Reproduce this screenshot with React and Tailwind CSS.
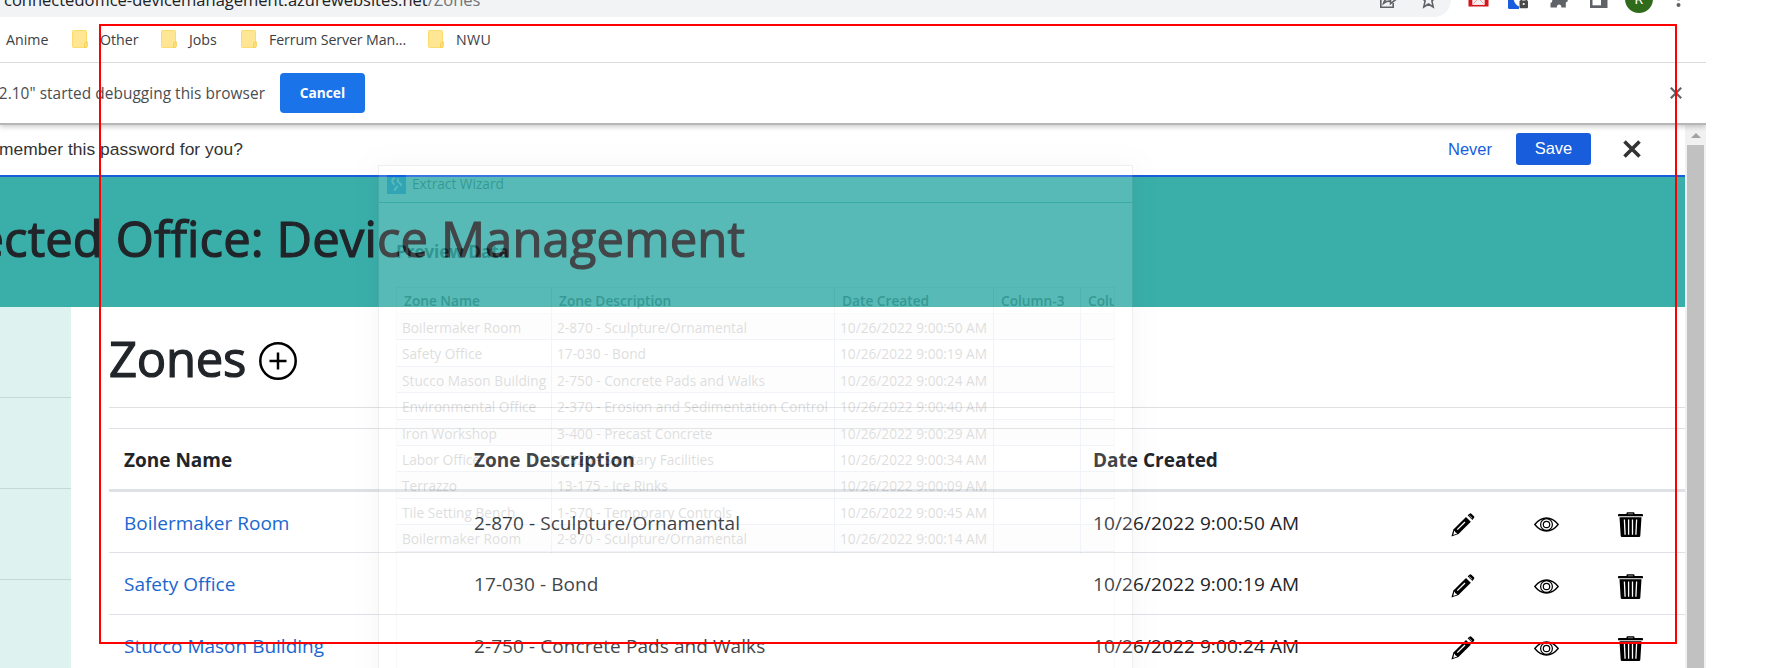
const zones = [
  ["Boilermaker Room", "2-870 - Sculpture/Ornamental", "10/26/2022 9:00:50 AM"],
  ["Safety Office", "17-030 - Bond", "10/26/2022 9:00:19 AM"],
  ["Stucco Mason Building", "2-750 - Concrete Pads and Walks", "10/26/2022 9:00:24 AM"],
];

const previewRows = [
  ...zones,
  ["Environmental Office", "2-370 - Erosion and Sedimentation Control", "10/26/2022 9:00:40 AM"],
  ["Iron Workshop", "3-400 - Precast Concrete", "10/26/2022 9:00:29 AM"],
  ["Labor Office", "1-520 - Sanitary Facilities", "10/26/2022 9:00:34 AM"],
  ["Terrazzo", "13-175 - Ice Rinks", "10/26/2022 9:00:09 AM"],
  ["Tile Setting Bench", "1-570 - Temporary Controls", "10/26/2022 9:00:45 AM"],
  ["Boilermaker Room", "2-870 - Sculpture/Ornamental", "10/26/2022 9:00:14 AM"],
];

function Folder() {
  return (
    <svg className="h-[18px] w-[16px] shrink-0" viewBox="0 0 16 18">
      <rect x="0.5" y="0.5" width="14" height="17" rx="0.8" fill="#ffe694" stroke="#fbdc6c" />
      <path d="M12.5 17.5v-4.2l2.8-1.6v4.6q0 1.2-1.2 1.2z" fill="#ffe27c" stroke="#f5cf4f" strokeWidth="0.9" />
    </svg>
  );
}

function Bookmark({ children, className }) {
  return (
    <div className={`flex items-center ${className}`}>
      <Folder />
      <span className="ml-[12px]">{children}</span>
    </div>
  );
}

function ToolbarIcons() {
  return (
    <svg className="h-[17px] w-[336px] shrink-0" viewBox="1370 0 336 17">
      <g fill="none" stroke="#5f6368" strokeWidth="1.6">
        <path d="M1380.8-6V7.2H1393.2V3" />
        <path d="M1383.5 3.5C1384.5-.5 1387-2 1390.5-2V-5L1396-.6 1390.5 3.6V.9C1387.500.9 1385.500 1.700 1383.500 3.500Z" />
        <path d="M1428.500-8L1430.500-3.200 1436-2.700 1431.900.9 1433.200 7 1428.500 4 1423.800 7 1425.100.9 1421-2.700 1426.500-3.200Z" />
      </g>
      <rect x="1468.500" y="-8" width="20" height="14.500" fill="#f7eeee" />
      <path d="M1468.500-8h3.800V6.500h-3.800zM1484.700-8h3.800V6.500h-3.800z" fill="#d5141c" />
      <path d="M1472 5.700h13" stroke="#d5141c" strokeWidth="1.500" />
      <path d="M1473.500 3.500l4-4M1483.500 3.500l-4-4" stroke="#eba0a3" strokeWidth="1" />
      <path d="M1508-8h11V9h-9.500q-1.500 0-1.500-1.500z" fill="#175ddc" />
      <path d="M1513-4h8V7.500Q1513.500 5 1513-4z" fill="#fff" />
      <rect x="1519.500" y="0.500" width="8.500" height="7.800" rx="1" fill="#4a4a4a" />
      <path d="M1521.300 1v-2.200a2.500 2.500 0 0 1 5 0V1" fill="none" stroke="#4a4a4a" strokeWidth="1.500" />
      <circle cx="1523.700" cy="4" r="1.100" fill="#fff" />
      <path d="M1550.500-6h17V-.8q.5 .8 0 2.300l-1.700 1V7.500h-4.500V6.200q-.4-1.700-2.200-1.700t-2.200 1.700V7.500h-6.400V3q1.800-.5 1.800-2.200t-1.800-2z" fill="#5f6368" />
      <path d="M1590-6h17.500V8H1590z" fill="#5f6368" />
      <path d="M1592.500-4h8.500V5.300h-8.500z" fill="#fff" />
      <circle cx="1639" cy="-1" r="14" fill="#2f6b1a" />
      <text x="1634.500" y="3.800" fill="#fff" fontFamily="Roboto, sans-serif" fontSize="14">R</text>
      <circle cx="1678.500" cy="5" r="2" fill="#5f6368" />
      <circle cx="1678.500" cy="-1.500" r="2" fill="#5f6368" />
    </svg>
  );
}

function Pencil() {
  return (
    <svg className="h-[24px] w-[24px]" viewBox="0 0 24 24">
      <path d="M16.600 2.200L18.900.5Q19.700 0 20.400.7L23 3.200Q23.700 4 23.100 4.700L21.400 6.900Z" fill="#000" />
      <path d="M15 4L19.800 8.800 7.500 21 .400 23.500 2.400 16.500Z" fill="#000" />
      <path d="M15.700 3.200L20.500 8" stroke="#fff" strokeWidth="0.900" />
      <path d="M6.300 16.600L14 9" stroke="#fff" strokeWidth="1.300" />
      <path d="M3.300 17.500L4.400 19.300 6.300 20.400 2.300 21.900Z" fill="#fff" />
      <path d="M18.300 2.600L21.200 5.400" stroke="#fff" strokeWidth="0.700" />
    </svg>
  );
}

function Eye() {
  return (
    <svg className="h-[15px] w-[25px]" viewBox="0 0 25 15" fill="none" stroke="#000">
      <path d="M.8 7.500Q6 1 12.500 1T24.200 7.500Q19 14 12.500 14T.8 7.500Z" strokeWidth="1.300" />
      <circle cx="12.500" cy="7.500" r="5.900" strokeWidth="1.200" />
      <circle cx="12.500" cy="7.500" r="3.200" strokeWidth="1.200" />
    </svg>
  );
}

function Trash() {
  return (
    <svg className="h-[25px] w-[25px]" viewBox="0 0 25 25">
      <path d="M8.500 2V1.200Q8.500.3 9.500.3h6q1 0 1 .9V2h7.700q.8 0 .8.9v1.300H0V2.900Q0 2 .8 2z" fill="#000" />
      <path d="M10 1.800h5" stroke="#888" strokeWidth="0.900" />
      <path d="M1.500 5.200h22l-1.200 18.500q0 1.300-1.300 1.300H4q-1.300 0-1.300-1.300z" fill="#000" />
      <path d="M6.400 7.500L7.100 22.800M10.600 7.500V22.800M14.500 7.500V22.800M18.600 7.500L17.900 22.800" stroke="#fff" strokeWidth="1.300" />
    </svg>
  );
}

function PreviewWindow() {
  return (
    <div className="absolute left-[378px] top-[165px] flex h-[520px] w-[755px] flex-col border border-[#999] bg-white text-[13.7px] text-[#222] opacity-15 shadow-[0_2px_20px_rgba(0,0,0,0.25)]">
      <div className="flex h-[37px] shrink-0 items-center border-b border-[#3c9a95] pl-[8px]">
        <svg className="h-[19px] w-[19px]" viewBox="0 0 19 19">
          <rect width="19" height="19" fill="#0078ff" />
          <path d="M8 3Q4.500 4 5.500 7T9 10.500 7 15.500M11.500 3.500Q9.500 6 12.500 8T13.500 13" fill="none" stroke="#fff" strokeWidth="2" strokeDasharray="9 2" />
        </svg>
        <span className="ml-[6px]">Extract Wizard</span>
      </div>
      <div className="flex h-[84px] shrink-0 items-center pl-[17px] pt-[14px] text-[17px] font-bold text-black">Preview Data</div>
      <div className="ml-[17px] w-[719px] grow overflow-hidden border border-[#ddd]">
        <div className="grid h-[26px] w-[800px] grid-cols-[155px_283px_159px_87px_1fr] border-b border-[#ddd] font-semibold leading-[26px]">
          {["Zone Name", "Zone Description", "Date Created", "Column-3", "Column-4"].map((name) => (
            <span key={name} className="border-r border-[#ccc] pl-[7px]">{name}</span>
          ))}
        </div>
        {previewRows.map((row, i) => (
          <div
            key={i}
            className="grid h-[26.400px] w-[800px] grid-cols-[155px_283px_159px_87px_1fr] border-b-[1.500px] border-[#a3b4d2] leading-[28px] even:bg-[#f7f7f7]"
          >
            {[...row, "", ""].map((cell, j) => (
              <span key={j} className="whitespace-nowrap border-r border-[#a3b4d2] pl-[5px]">{cell}</span>
            ))}
          </div>
        ))}
      </div>
    </div>
  );
}

const columns = "grid grid-cols-[349px_620px_358px_83px_84px_67px] items-center";

export default function App() {
  return (
    <div className="relative flex h-[668px] w-[1776px] flex-col overflow-hidden bg-white font-['Open_Sans','Noto_Sans',sans-serif] text-[#212529]">
      <div className="flex h-[17px] w-[1706px] shrink-0 overflow-hidden">
        <div className="h-[17px] w-[1370px] bg-[#f1f3f4] pl-[4px]">
          <div className="-mt-[12px] whitespace-nowrap text-[16.500px] leading-[24px] text-[#202124]">
            connectedoffice-devicemanagement.azurewebsites.net<span className="text-[#70757a]">/Zones</span>
          </div>
        </div>
        <div className="h-[17px] w-[336px]">
          <div className="h-[17px] w-[81px] rounded-br-[17px] bg-[#f1f3f4]" />
          <div className="relative -mt-[17px]">
            <ToolbarIcons />
          </div>
        </div>
      </div>

      <div className="flex h-[46px] w-[1706px] shrink-0 items-center border-b border-[#dadce0] text-[14.200px] text-[#3c4043]">
        <span className="ml-[6px] w-[66px]">Anime</span>
        <Bookmark className="w-[89px]">Other</Bookmark>
        <Bookmark className="w-[80px]">Jobs</Bookmark>
        <Bookmark className="w-[187px] tracking-[-0.100px]">Ferrum Server Man...</Bookmark>
        <Bookmark className="tracking-[0.300px]">NWU</Bookmark>
      </div>

      <div className="relative flex h-[62px] w-[1706px] shrink-0 items-center border-b-2 border-[#b4b6b8] shadow-[0_2px_5px_rgba(0,0,0,0.2)] [clip-path:inset(0_0_-8px_0)]">
        <div className="flex w-[265px] justify-end whitespace-nowrap pt-[2px] text-[15.400px] tracking-[0.050px] text-[#4a4d51]">2.10" started debugging this browser</div>
        <div className="ml-[15px] flex h-[40px] w-[85px] items-center justify-center rounded-[4px] bg-[#1a73e8] text-[13.700px] font-bold text-white">
          Cancel
        </div>
        <svg className="ml-auto mr-[24px] h-[12px] w-[12px]" viewBox="0 0 12 12">
          <path d="M.8.8L11.200 11.200M11.200.8L.8 11.200" stroke="#5f6368" strokeWidth="2.200" />
        </svg>
      </div>

      <div className="flex w-[1706px] grow">
        <div className="flex w-[1685px] flex-col overflow-hidden">
          <div className="flex h-[52px] shrink-0 items-center border-b-2 border-[#175ddc] pb-[2px] font-['Liberation_Sans',Arial,sans-serif]">
            <div className="flex w-[243px] justify-end whitespace-nowrap text-[17.400px] tracking-[0.050px] text-[#333]">remember this password for you?</div>
            <span className="ml-auto text-[16.500px] text-[#175ddc]">Never</span>
            <div className="ml-[24px] flex h-[32px] w-[75px] items-center justify-center rounded-[3px] bg-[#175ddc] pb-px text-[16.500px] text-white">Save</div>
            <svg className="ml-[32px] mr-[44px] h-[18px] w-[18px]" viewBox="0 0 18 18">
              <path d="M1.500 1.500L16.500 16.500M16.500 1.500L1.500 16.500" stroke="#333" strokeWidth="3.600" />
            </svg>
          </div>

          <div className="flex h-[130px] shrink-0 items-center bg-[#3aaea9] pb-[8px]">
            <h1 className="flex w-[745px] justify-end whitespace-nowrap text-[49px] leading-[60px] tracking-[0.100px] [-webkit-text-stroke:1.2px_#212529]">
              Connected Office: Device Management
            </h1>
          </div>

          <div className="flex grow">
            <div className="w-[71px] shrink-0 bg-[#def2f0]">
              <div className="h-[91px] border-b border-[#c4d9d8]" />
              <div className="h-[91px] border-b border-[#c4d9d8]" />
              <div className="h-[91px] border-b border-[#c4d9d8]" />
            </div>
            <div className="ml-[38px] w-[1576px] shrink-0">
              <div className="flex h-[101px] items-center border-b border-[#dee0e2] pt-[2px]">
                <h2 className="text-[49px] leading-[60px] tracking-[-0.300px] [-webkit-text-stroke:1.2px_#212529]">Zones</h2>
                <svg className="ml-[13px] mt-[6px] h-[38px] w-[38px]" viewBox="0 0 38 38" fill="none" stroke="#000" strokeWidth="2.500">
                  <circle cx="19" cy="19" r="17.700" />
                  <path d="M19 10.500v17M10.500 19h17" />
                </svg>
              </div>
              <div className="mt-[20px] border-t border-[#dee2e6]">
                <div className={`${columns} h-[63px] border-b-[3px] border-[#dee2e6] pl-[15px] pt-[2px] text-[19px] font-bold`}>
                  <span>Zone Name</span>
                  <span className="pl-px">Zone Description</span>
                  <span>Date Created</span>
                </div>
                {zones.map(([name, description, date]) => (
                  <div key={name} className={`${columns} h-[62px] border-b border-[#dee2e6] pl-[15px] pt-[2px] text-[19px] nth-[2]:h-[61px]`}>
                    <span className="text-[#1b66cf]">{name}</span>
                    <span className="pl-px tracking-[0.080px]">{description}</span>
                    <span className="tracking-[0.100px]">{date}</span>
                    <div className="pt-[3px]"><Pencil /></div>
                    <div className="pt-[3px]"><Eye /></div>
                    <div className="pt-[3px]"><Trash /></div>
                  </div>
                ))}
              </div>
            </div>
          </div>
        </div>

        <div className="flex w-[21px] flex-col items-center bg-[#f1f1f1]">
          <svg className="mt-[8px] h-[5px] w-[10px] shrink-0" viewBox="0 0 10 5">
            <path d="M0 5L5 0L10 5Z" fill="#a3a3a3" />
          </svg>
          <div className="mt-[7px] w-[17px] grow bg-[#c1c1c1]" />
        </div>
      </div>

      <PreviewWindow />
      <div className="absolute left-[99px] top-[24px] h-[620px] w-[1578px] border-2 border-[#ff0000]" />
    </div>
  );
}
